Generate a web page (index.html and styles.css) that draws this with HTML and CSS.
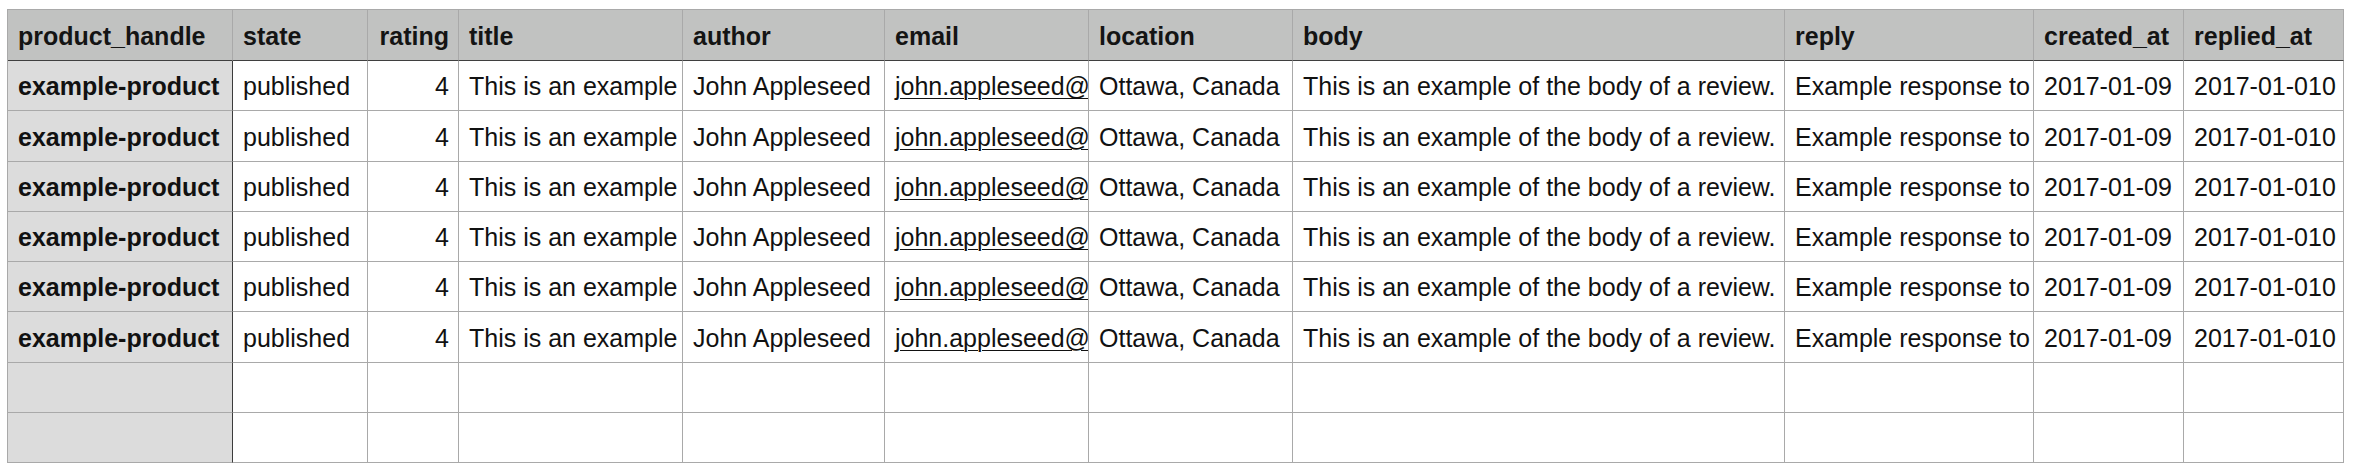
FILE: index.html
```html
<!DOCTYPE html>
<html lang="en">
<head>
<meta charset="utf-8">
<title>Product reviews</title>
<link rel="stylesheet" href="styles.css">
</head>
<body>
<table class="sheet">
  <colgroup>
    <col class="c-handle">
    <col class="c-state">
    <col class="c-rating">
    <col class="c-title">
    <col class="c-author">
    <col class="c-email">
    <col class="c-location">
    <col class="c-body">
    <col class="c-reply">
    <col class="c-created">
    <col class="c-replied">
  </colgroup>
  <thead>
    <tr>
      <th class="key">product_handle</th>
      <th>state</th>
      <th class="num">rating</th>
      <th>title</th>
      <th>author</th>
      <th>email</th>
      <th>location</th>
      <th>body</th>
      <th>reply</th>
      <th>created_at</th>
      <th>replied_at</th>
    </tr>
  </thead>
  <tbody>
    <tr>
      <td class="key">example-product</td>
      <td>published</td>
      <td class="num">4</td>
      <td>This is an example</td>
      <td>John Appleseed</td>
      <td><span class="link">john.appleseed@example.com</span></td>
      <td>Ottawa, Canada</td>
      <td>This is an example of the body of a review.</td>
      <td>Example response to</td>
      <td>2017-01-09</td>
      <td>2017-01-010</td>
    </tr>
    <tr>
      <td class="key">example-product</td>
      <td>published</td>
      <td class="num">4</td>
      <td>This is an example</td>
      <td>John Appleseed</td>
      <td><span class="link">john.appleseed@example.com</span></td>
      <td>Ottawa, Canada</td>
      <td>This is an example of the body of a review.</td>
      <td>Example response to</td>
      <td>2017-01-09</td>
      <td>2017-01-010</td>
    </tr>
    <tr>
      <td class="key">example-product</td>
      <td>published</td>
      <td class="num">4</td>
      <td>This is an example</td>
      <td>John Appleseed</td>
      <td><span class="link">john.appleseed@example.com</span></td>
      <td>Ottawa, Canada</td>
      <td>This is an example of the body of a review.</td>
      <td>Example response to</td>
      <td>2017-01-09</td>
      <td>2017-01-010</td>
    </tr>
    <tr>
      <td class="key">example-product</td>
      <td>published</td>
      <td class="num">4</td>
      <td>This is an example</td>
      <td>John Appleseed</td>
      <td><span class="link">john.appleseed@example.com</span></td>
      <td>Ottawa, Canada</td>
      <td>This is an example of the body of a review.</td>
      <td>Example response to</td>
      <td>2017-01-09</td>
      <td>2017-01-010</td>
    </tr>
    <tr>
      <td class="key">example-product</td>
      <td>published</td>
      <td class="num">4</td>
      <td>This is an example</td>
      <td>John Appleseed</td>
      <td><span class="link">john.appleseed@example.com</span></td>
      <td>Ottawa, Canada</td>
      <td>This is an example of the body of a review.</td>
      <td>Example response to</td>
      <td>2017-01-09</td>
      <td>2017-01-010</td>
    </tr>
    <tr>
      <td class="key">example-product</td>
      <td>published</td>
      <td class="num">4</td>
      <td>This is an example</td>
      <td>John Appleseed</td>
      <td><span class="link">john.appleseed@example.com</span></td>
      <td>Ottawa, Canada</td>
      <td>This is an example of the body of a review.</td>
      <td>Example response to</td>
      <td>2017-01-09</td>
      <td>2017-01-010</td>
    </tr>
    <tr class="empty">
      <td class="key"></td><td></td><td></td><td></td><td></td><td></td><td></td><td></td><td></td><td></td><td></td>
    </tr>
    <tr class="empty">
      <td class="key"></td><td></td><td></td><td></td><td></td><td></td><td></td><td></td><td></td><td></td><td></td>
    </tr>
  </tbody>
</table>
</body>
</html>
```

FILE: styles.css
```css
* {
  box-sizing: border-box;
}

html, body {
  margin: 0;
  padding: 0;
  background: #ffffff;
}

body {
  padding: 9px 0 0 7px;
  font-family: "Liberation Sans", Arial, Helvetica, sans-serif;
  font-size: 25px;
  color: #111111;
}

.sheet {
  table-layout: fixed;
  border-collapse: separate;
  border-spacing: 0;
  width: 2337px;
  border-top: 1px solid #a9a9a9;
  border-left: 1px solid #a9a9a9;
}

.c-handle   { width: 225px; }
.c-state    { width: 135px; }
.c-rating   { width: 91px; }
.c-title    { width: 224px; }
.c-author   { width: 202px; }
.c-email    { width: 204px; }
.c-location { width: 204px; }
.c-body     { width: 492px; }
.c-reply    { width: 249px; }
.c-created  { width: 150px; }
.c-replied  { width: 160px; }

.sheet th,
.sheet td {
  padding: 2px 9px 0 10px;
  border-right: 1px solid #a9a9a9;
  border-bottom: 1px solid #a9a9a9;
  white-space: nowrap;
  overflow: hidden;
  text-align: left;
  vertical-align: middle;
  line-height: 1.15;
}

.sheet th {
  height: 51px;
  background: #c1c2c1;
  font-weight: bold;
  color: #141414;
  border-bottom-color: #3f3f3f;
}

.sheet td {
  height: 50.25px;
  font-weight: normal;
}

.sheet td.key {
  background: #dcdcdc;
  font-weight: bold;
  border-right-color: #3c3c3c;
}

.sheet .num {
  text-align: right;
}

.link {
  text-decoration: underline;
  text-underline-offset: 3px;
  text-decoration-thickness: 1px;
}
```
